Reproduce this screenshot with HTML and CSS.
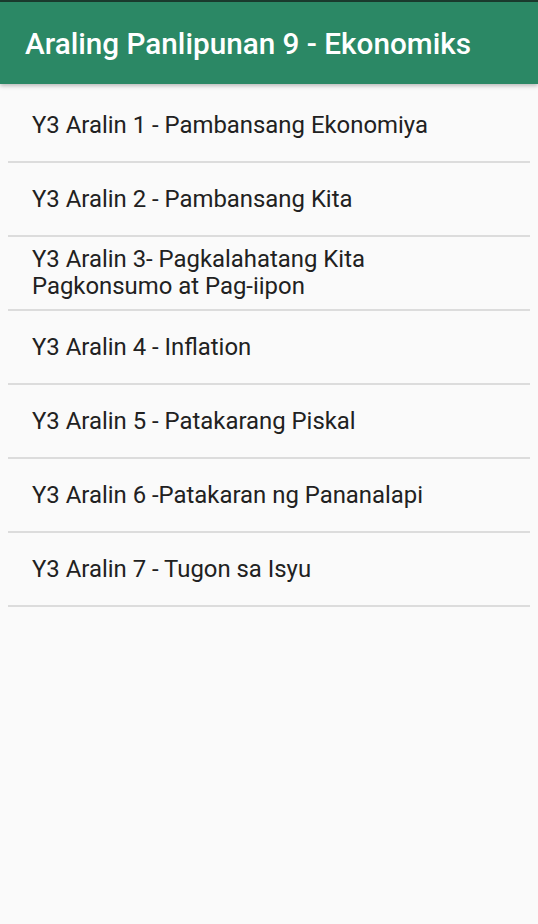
FILE: index.html
```html
<!DOCTYPE html>
<html lang="tl">
<head>
<meta charset="utf-8">
<title>Araling Panlipunan 9 - Ekonomiks</title>
<link rel="stylesheet" href="styles.css">
</head>
<body>
<div class="status"></div>
<header class="appbar">
  <h1 class="title">Araling Panlipunan 9 - Ekonomiks</h1>
</header>
<ul class="list">
  <li class="item">Y3 Aralin 1 - Pambansang Ekonomiya</li>
  <li class="item">Y3 Aralin 2 - Pambansang Kita</li>
  <li class="item">Y3 Aralin 3- Pagkalahatang Kita<br>Pagkonsumo at Pag-iipon</li>
  <li class="item">Y3 Aralin 4 - Inflation</li>
  <li class="item">Y3 Aralin 5 - Patakarang Piskal</li>
  <li class="item">Y3 Aralin 6 -Patakaran ng Pananalapi</li>
  <li class="item">Y3 Aralin 7 - Tugon sa Isyu</li>
</ul>
</body>
</html>
```
FILE: styles.css
```css
html, body {
  margin: 0;
  padding: 0;
  height: 100%;
  background: #fafafa;
  font-family: Roboto, "Liberation Sans", sans-serif;
}
.status {
  height: 2px;
  background: #1b3b2e;
}
.appbar {
  height: 82px;
  background: #2b8865;
  display: flex;
  align-items: center;
  padding: 0 25px;
  box-shadow: 0 2px 4px rgba(0, 0, 0, 0.25);
  position: relative;
}
.title {
  margin: 0;
  color: #ffffff;
  font-size: 29.7px;
  font-weight: 500;
  letter-spacing: 0;
}
.list {
  list-style: none;
  margin: 0 8px;
  padding: 5px 0 0;
}
.item {
  min-height: 74px;
  box-sizing: border-box;
  display: flex;
  align-items: center;
  padding: 0 24px;
  border-bottom: 2px solid #dcdcdc;
  font-size: 23.9px;
  line-height: 27px;
  color: #212121;
}
```
